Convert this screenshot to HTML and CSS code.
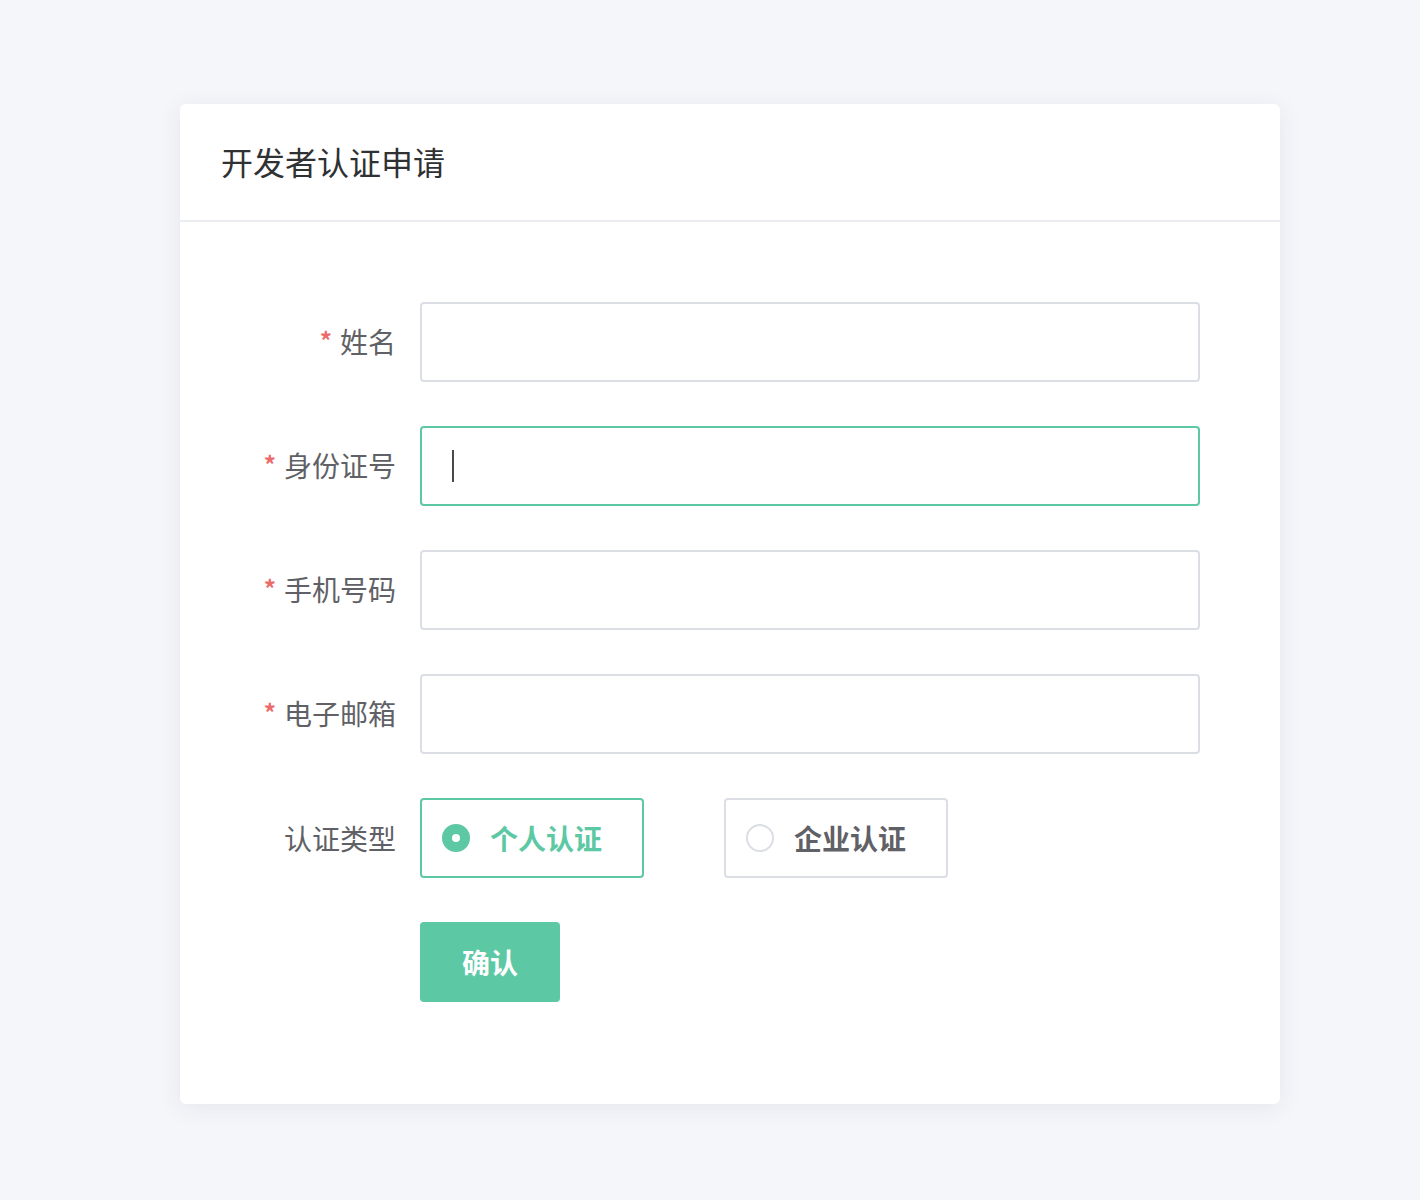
FILE: index.html
```html
<!DOCTYPE html>
<html lang="zh-CN">
<head>
<meta charset="utf-8">
<title>开发者认证申请</title>
<link rel="stylesheet" href="styles.css">
</head>
<body>
<div class="card">
  <div class="card-header">开发者认证申请</div>
  <div class="card-body">
    <form class="form">
      <div class="row">
        <label class="label"><span class="req">*</span>姓名</label>
        <div class="field"><input class="input" type="text"></div>
      </div>
      <div class="row">
        <label class="label"><span class="req">*</span>身份证号</label>
        <div class="field"><input class="input focused" type="text"><span class="caret"></span></div>
      </div>
      <div class="row">
        <label class="label"><span class="req">*</span>手机号码</label>
        <div class="field"><input class="input" type="text"></div>
      </div>
      <div class="row">
        <label class="label"><span class="req">*</span>电子邮箱</label>
        <div class="field"><input class="input" type="text"></div>
      </div>
      <div class="row">
        <label class="label">认证类型</label>
        <div class="radios">
          <div class="radio checked"><span class="dot"></span><span class="rtext">个人认证</span></div>
          <div class="radio"><span class="dot"></span><span class="rtext">企业认证</span></div>
        </div>
      </div>
      <div class="row">
        <span class="label"></span>
        <button type="button" class="btn">确认</button>
      </div>
    </form>
  </div>
</div>
</body>
</html>
```

FILE: styles.css
```css
html, body {
  margin: 0;
  padding: 0;
}
body {
  background: #f5f6fa;
  font-family: "Noto Sans CJK SC", "Noto Sans", sans-serif;
  padding-top: 104px;
  min-height: 1200px;
  box-sizing: border-box;
}
.card {
  width: 1100px;
  height: 1000px;
  margin-left: 180px;
  background: #fff;
  border-radius: 6px;
  box-shadow: 0 4px 24px rgba(40, 50, 90, 0.08);
  box-sizing: border-box;
}
.card-header {
  height: 118px;
  padding-left: 41px;
  display: flex;
  align-items: center;
  font-size: 32px;
  color: #303133;
  border-bottom: 2px solid #ebedf3;
  box-sizing: border-box;
  padding-bottom: 2px;
}
.card-body {
  padding: 80px 80px 0 40px;
}
.form {
  display: flex;
  flex-direction: column;
  gap: 44px;
}
.row {
  display: flex;
  align-items: center;
}
.label {
  width: 176px;
  padding-right: 24px;
  text-align: right;
  font-size: 28px;
  color: #5f6166;
  flex-shrink: 0;
  line-height: 40px;
}
.req {
  color: #ec6b6b;
  font-size: 24px;
  font-weight: 700;
  margin-right: 8px;
  position: relative;
  top: -3px;
}
.field {
  position: relative;
  flex: 1;
}
.input {
  display: block;
  width: 100%;
  height: 80px;
  box-sizing: border-box;
  border: 2px solid #dcdee5;
  border-radius: 4px;
  outline: none;
  font-family: inherit;
  font-size: 26px;
  padding: 0 30px;
  background: #fff;
}
.input.focused {
  border-color: #5cc8a4;
}
.caret {
  position: absolute;
  left: 32px;
  top: 24px;
  width: 2px;
  height: 32px;
  background: #4a4a4a;
}
.radios {
  display: flex;
  gap: 80px;
}
.radio {
  width: 224px;
  height: 80px;
  box-sizing: border-box;
  border: 2px solid #dcdee5;
  border-radius: 4px;
  display: flex;
  align-items: center;
  padding-left: 20px;
  gap: 20px;
}
.dot {
  width: 28px;
  height: 28px;
  box-sizing: border-box;
  border-radius: 50%;
  border: 2px solid #dcdee5;
  background: #fff;
  flex-shrink: 0;
}
.rtext {
  font-size: 28px;
  font-weight: 700;
  color: #5f6166;
}
.radio.checked {
  border-color: #5cc8a4;
}
.radio.checked .dot {
  border: 10px solid #5cc8a4;
}
.radio.checked .rtext {
  color: #5cc8a4;
}
.btn {
  width: 140px;
  height: 80px;
  border: none;
  border-radius: 4px;
  background: #5cc8a4;
  color: #fff;
  font-family: inherit;
  font-size: 28px;
  font-weight: 700;
  padding: 0;
  cursor: pointer;
}
```
